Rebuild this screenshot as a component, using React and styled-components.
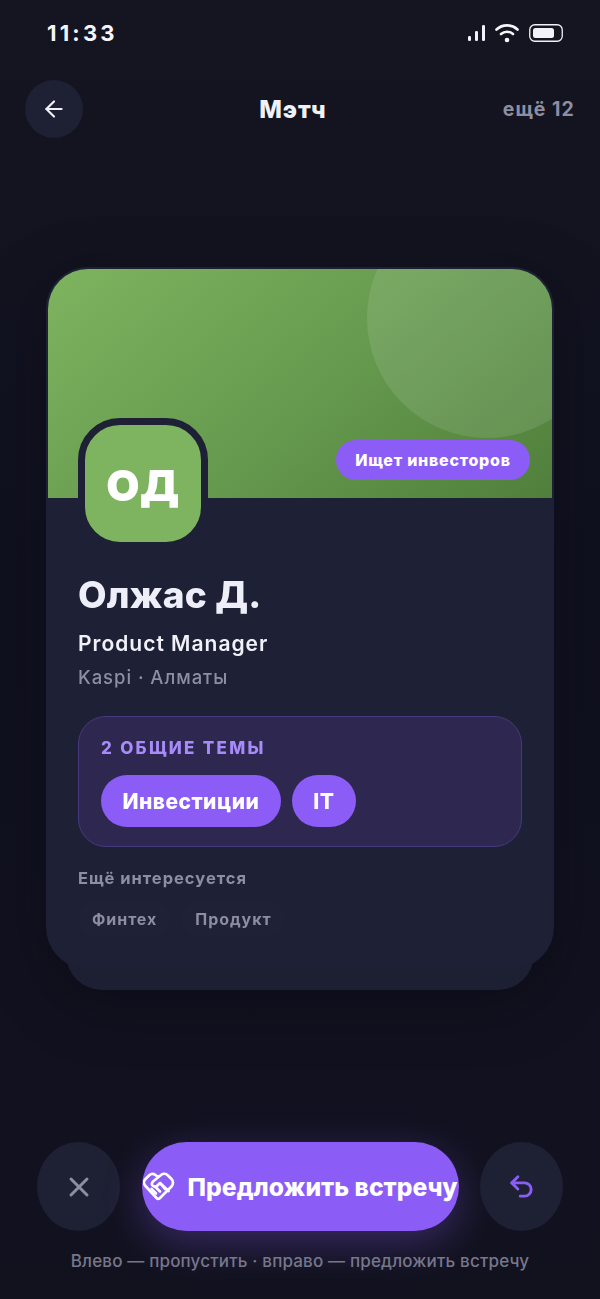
import React from "react";
import styled, { createGlobalStyle } from "styled-components";
import { ArrowLeft, X, Undo2 } from "lucide-react";

const Global = createGlobalStyle`
  * { box-sizing: border-box; }
  html, body { margin: 0; padding: 0; background: #12131f; }
  body { font-family: "Inter", "Noto Sans", sans-serif; }
`;

const Page = styled.div`
  width: 600px;
  height: 1299px;
  overflow: hidden;
  display: flex;
  flex-direction: column;
  color: #f1f1fa;
  background: linear-gradient(180deg, #141520 0%, #10111f 45%, #12121f 100%);
`;

const StatusBar = styled.div`
  height: 66px;
  padding: 0 37px 0 47px;
  display: flex;
  align-items: center;
  justify-content: space-between;
`;

const Time = styled.span`
  font-size: 22px;
  font-weight: 700;
  letter-spacing: 3.2px;
  color: #f5f5fb;
`;

const StatusIcons = styled.div`
  display: flex;
  align-items: center;
  gap: 10px;
`;

const Header = styled.header`
  height: 58px;
  margin-top: 14px;
  padding: 0 25px;
  display: flex;
  align-items: center;
  justify-content: space-between;
`;

const RoundButton = styled.button`
  width: ${(p) => p.$w || 58}px;
  height: ${(p) => p.$h || 58}px;
  flex: none;
  padding: 0;
  border: 0;
  border-radius: 50%;
  background: #1e2033;
  color: ${(p) => p.$color || "#f1f1fa"};
  display: flex;
  align-items: center;
  justify-content: center;
`;

const Title = styled.h1`
  margin: 0;
  font-size: 24px;
  font-weight: 800;
  letter-spacing: 0.8px;
  color: #f1f1fa;
`;

const Remaining = styled.span`
  font-size: 19.5px;
  font-weight: 700;
  letter-spacing: 1.1px;
  color: #8e8ea3;
`;

const CardStack = styled.div`
  position: relative;
  margin: 129px 46px 0;
  height: 723px;
  filter: drop-shadow(0 14px 30px rgba(5, 5, 15, 0.4));
`;

const BackCard = styled.div`
  position: absolute;
  left: 20px;
  right: 20px;
  bottom: 0;
  height: 120px;
  border-radius: 0 0 36px 36px;
  background: #1d1f33;
`;

const Card = styled.article`
  position: relative;
  height: 702px;
  border-radius: 42px;
  border: 2px solid #1e2035;
  background: #1e2035;
  overflow: hidden;
`;

const Hero = styled.div`
  position: relative;
  height: 229px;
  padding: 0 22px 18px;
  display: flex;
  align-items: flex-end;
  justify-content: flex-end;
  overflow: hidden;
  background: linear-gradient(140deg, #7eb35f 0%, #679c50 50%, #507f3b 100%);
`;

const HeroCircle = styled.div`
  position: absolute;
  top: -71px;
  right: -55px;
  width: 240px;
  height: 240px;
  border-radius: 50%;
  background: rgba(255, 255, 255, 0.1);
`;

const IntentTag = styled.span`
  position: relative;
  height: 40px;
  width: 194px;
  border-radius: 20px;
  background: #8b5cf6;
  color: #fff;
  font-size: 16px;
  font-weight: 800;
  letter-spacing: 0.75px;
  display: flex;
  align-items: center;
  justify-content: center;
`;

const Body = styled.div`
  position: relative;
  padding: 0 30px;
`;

const Avatar = styled.div`
  width: 130px;
  height: 131px;
  margin-top: -80px;
  padding-top: 3px;
  border-radius: 42px;
  border: 7px solid #1e2035;
  background: #7eb35f;
  color: #fff;
  font-size: 43px;
  font-weight: 900;
  letter-spacing: 0.5px;
  display: flex;
  align-items: center;
  justify-content: center;
`;

const Name = styled.h2`
  margin: 22px 0 0;
  font-size: 37px;
  line-height: 48px;
  font-weight: 800;
  letter-spacing: 0.2px;
  color: #eeeef9;
`;

const Role = styled.div`
  margin-top: 12px;
  font-size: 21px;
  line-height: 26px;
  font-weight: 600;
  letter-spacing: 1px;
  color: #f1f1fa;
`;

const Place = styled.div`
  margin-top: 7px;
  font-size: 18.5px;
  line-height: 26px;
  font-weight: 500;
  letter-spacing: 0.95px;
  color: #8e8ea3;
`;

const Topics = styled.section`
  margin-top: 26px;
  height: 131px;
  padding: 20px 22px 0;
  border-radius: 28px;
  border: 1.5px solid #47397f;
  background: #2e2750;
`;

const TopicsLabel = styled.div`
  font-size: 17px;
  line-height: 22px;
  font-weight: 800;
  letter-spacing: 2.3px;
  color: #a78bfa;
`;

const PillRow = styled.div`
  display: flex;
  gap: 11px;
  margin-top: 16px;
`;

const TopicPill = styled.span`
  height: 52px;
  padding: 0 21.5px;
  border-radius: 26px;
  background: #8b5cf6;
  color: #fff;
  font-size: 21px;
  font-weight: 800;
  letter-spacing: 0.45px;
  display: flex;
  align-items: center;
`;

const MoreLabel = styled.div`
  margin-top: 20px;
  font-size: 16.5px;
  line-height: 22px;
  font-weight: 700;
  letter-spacing: 1px;
  color: #8e8ea3;
`;

const ChipRow = styled.div`
  display: flex;
  gap: 10px;
  margin-top: 12px;
`;

const Chip = styled.span`
  height: 36px;
  padding: 0 14px;
  border-radius: 18px;
  background: #1f2136;
  color: #8e8ea3;
  font-size: 16px;
  font-weight: 700;
  letter-spacing: 0.95px;
  display: flex;
  align-items: center;
`;

const Actions = styled.div`
  margin-top: 152px;
  padding: 0 37px;
  display: flex;
  align-items: center;
  justify-content: space-between;
`;

const MeetButton = styled.button`
  width: 317px;
  height: 89px;
  padding: 0;
  border: 0;
  border-radius: 45px;
  background: #8b5cf6;
  color: #fff;
  font-family: inherit;
  font-size: 24.7px;
  font-weight: 800;
  white-space: nowrap;
  display: flex;
  align-items: center;
  justify-content: center;
  gap: 13px;
  box-shadow: 0 12px 40px rgba(139, 92, 246, 0.32);
`;

const Hint = styled.div`
  margin-top: 19px;
  text-align: center;
  font-size: 17px;
  line-height: 22px;
  font-weight: 500;
  letter-spacing: 0.17px;
  color: #77778c;
`;

const SignalIcon = () => (
  <svg width="18" height="18" viewBox="0 0 18 18" fill="#f1f1fa">
    <rect x="1" y="12" width="3" height="5" rx="1.2" />
    <rect x="8" y="7" width="3" height="10" rx="1.2" />
    <rect x="15" y="1" width="3" height="16" rx="1.2" />
  </svg>
);

const WifiIcon = () => (
  <svg width="24" height="20" viewBox="0 0 24 20" fill="none" stroke="#f5f5fb" strokeWidth="2.6" strokeLinecap="round">
    <path d="M1.5 6.5C7.5 1 16.5 1 22.5 6.5" />
    <path d="M6 11c3.5-3 8.5-3 12 0" />
    <circle cx="12" cy="17" r="1.6" fill="#f5f5fb" strokeWidth="1.4" />
  </svg>
);

const BatteryIcon = () => (
  <svg width="34" height="20" viewBox="0 0 34 20" fill="none">
    <rect x="0.75" y="1.75" width="32.5" height="16.5" rx="5" stroke="#f1f1fa" strokeWidth="1.3" />
    <rect x="4" y="5" width="21" height="10" rx="2.5" fill="#f1f1fa" />
  </svg>
);

const ShakeIcon = () => (
  <svg width="32" height="30" viewBox="0 0 32 30" fill="none" stroke="#fff" strokeWidth="2.7" strokeLinecap="round" strokeLinejoin="round">
    <path d="M15 5 12.5 3C10.5 1.5 8 1.5 6 3.5L2.5 7C.5 9 .5 12 2.5 14L13.5 26C14.5 27 16 27 17 26L28.5 14.5C30.5 12.5 30.5 9 28.5 7L25 3.5C23 1.5 20 1.5 18 3L10 9.5C8.5 11 8.5 13 10 14 11.5 15 13 15 14.5 13.5L17 11 25.5 19" />
    <path d="M8.5 17 13 21.5M12 14.5 17 19.5M17.5 11.5 22 17" />
  </svg>
);

export default function App() {
  return (
    <Page>
      <Global />
      <StatusBar>
        <Time>11:33</Time>
        <StatusIcons>
          <SignalIcon />
          <WifiIcon />
          <BatteryIcon />
        </StatusIcons>
      </StatusBar>
      <Header>
        <RoundButton aria-label="Назад">
          <ArrowLeft size={26} strokeWidth={2} />
        </RoundButton>
        <Title>Мэтч</Title>
        <Remaining>ещё 12</Remaining>
      </Header>
      <CardStack>
        <BackCard />
        <Card>
          <Hero>
            <HeroCircle />
            <IntentTag>Ищет инвесторов</IntentTag>
          </Hero>
          <Body>
            <Avatar>ОД</Avatar>
            <Name>Олжас Д.</Name>
            <Role>Product Manager</Role>
            <Place>Kaspi · Алматы</Place>
            <Topics>
              <TopicsLabel>2 ОБЩИЕ ТЕМЫ</TopicsLabel>
              <PillRow>
                <TopicPill>Инвестиции</TopicPill>
                <TopicPill>IT</TopicPill>
              </PillRow>
            </Topics>
            <MoreLabel>Ещё интересуется</MoreLabel>
            <ChipRow>
              <Chip>Финтех</Chip>
              <Chip>Продукт</Chip>
            </ChipRow>
          </Body>
        </Card>
      </CardStack>
      <Actions>
        <RoundButton $w={83} $h={89} $color="#8e8ea3" aria-label="Пропустить">
          <X size={32} strokeWidth={2.2} />
        </RoundButton>
        <MeetButton>
          <ShakeIcon />
          Предложить встречу
        </MeetButton>
        <RoundButton $w={83} $h={89} $color="#8b5cf6" aria-label="Вернуть">
          <Undo2 size={29} strokeWidth={2.4} />
        </RoundButton>
      </Actions>
      <Hint>Влево — пропустить · вправо — предложить встречу</Hint>
    </Page>
  );
}
